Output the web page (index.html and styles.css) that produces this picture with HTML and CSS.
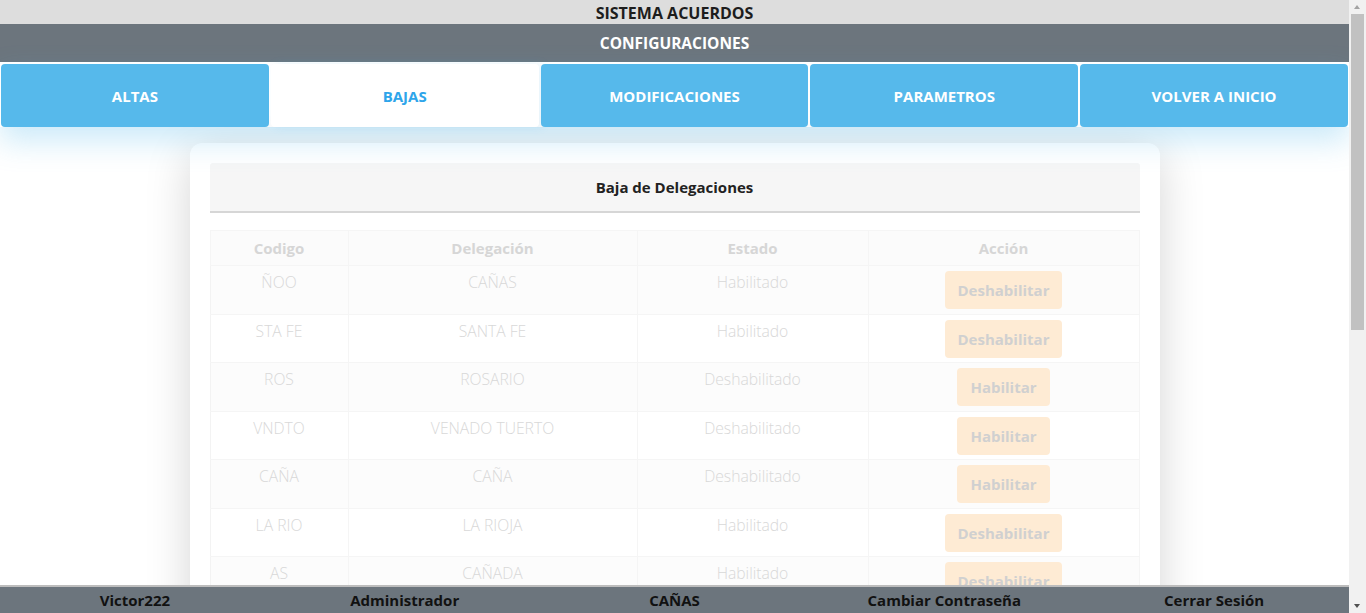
FILE: index.html
```html
<!DOCTYPE html>
<html lang="es">
<head>
<meta charset="utf-8">
<title>Sistema Acuerdos - Configuraciones</title>
<link rel="stylesheet" href="styles.css">
</head>
<body>
<header class="top-bar">SISTEMA ACUERDOS</header>
<div class="section-bar">CONFIGURACIONES</div>
<nav class="tabs">
  <a class="tab">ALTAS</a>
  <a class="tab active">BAJAS</a>
  <a class="tab">MODIFICACIONES</a>
  <a class="tab">PARAMETROS</a>
  <a class="tab">VOLVER A INICIO</a>
</nav>
<main class="content">
  <section class="card">
    <div class="card-header">Baja de Delegaciones</div>
    <table class="grid">
      <thead>
        <tr><th class="c1">Codigo</th><th class="c2">Delegación</th><th class="c3">Estado</th><th class="c4">Acción</th></tr>
      </thead>
      <tbody>
        <tr><td>ÑOO</td><td>CAÑAS</td><td>Habilitado</td><td><button class="btn">Deshabilitar</button></td></tr>
        <tr><td>STA FE</td><td>SANTA FE</td><td>Habilitado</td><td><button class="btn">Deshabilitar</button></td></tr>
        <tr><td>ROS</td><td>ROSARIO</td><td>Deshabilitado</td><td><button class="btn">Habilitar</button></td></tr>
        <tr><td>VNDTO</td><td>VENADO TUERTO</td><td>Deshabilitado</td><td><button class="btn">Habilitar</button></td></tr>
        <tr><td>CAÑA</td><td>CAÑA</td><td>Deshabilitado</td><td><button class="btn">Habilitar</button></td></tr>
        <tr><td>LA RIO</td><td>LA RIOJA</td><td>Habilitado</td><td><button class="btn">Deshabilitar</button></td></tr>
        <tr><td>AS</td><td>CAÑADA</td><td>Habilitado</td><td><button class="btn">Deshabilitar</button></td></tr>
        <tr><td>RAF</td><td>RAFAELA</td><td>Habilitado</td><td><button class="btn">Deshabilitar</button></td></tr>
        <tr><td>RECO</td><td>RECONQUISTA</td><td>Habilitado</td><td><button class="btn">Deshabilitar</button></td></tr>
        <tr><td>CORD</td><td>CORDOBA</td><td>Deshabilitado</td><td><button class="btn">Habilitar</button></td></tr>
        <tr><td>BSAS</td><td>BUENOS AIRES</td><td>Habilitado</td><td><button class="btn">Deshabilitar</button></td></tr>
        <tr><td>PARA</td><td>PARANA</td><td>Habilitado</td><td><button class="btn">Deshabilitar</button></td></tr>
      </tbody>
    </table>
  </section>
</main>
<footer class="footer">
  <span>Victor222</span>
  <span>Administrador</span>
  <span>CAÑAS</span>
  <span>Cambiar Contraseña</span>
  <span>Cerrar Sesión</span>
</footer>
<div class="scrollbar" aria-hidden="true">
  <span class="sb-arrow sb-up"></span>
  <span class="sb-thumb"></span>
  <span class="sb-arrow sb-down"></span>
</div>
</body>
</html>
```

FILE: styles.css
```css
* { box-sizing: border-box; }

html {
  overflow: hidden;
}

html, body {
  padding: 0;
  background: #ffffff;
  font-family: "Open Sans", "Noto Sans", "Liberation Sans", sans-serif;
}

body {
  margin: 0 17px 0 0;
}

.top-bar {
  height: 24px;
  background: #dddddd;
  color: #1d1d1d;
  font-weight: 700;
  font-size: 16px;
  line-height: 26px;
  text-align: center;
}

.section-bar {
  height: 38px;
  background: #6c757d;
  color: #ffffff;
  font-weight: 700;
  font-size: 15.5px;
  line-height: 38px;
  text-align: center;
}

.tabs {
  display: grid;
  grid-template-columns: repeat(5, 1fr);
  gap: 2px;
  padding: 2px 1px 0 1px;
  box-shadow: 0 14px 30px rgba(86, 184, 234, 0.3);
  position: relative;
  z-index: 1;
}

.tab {
  height: 63px;
  background: #56b9eb;
  color: #ffffff;
  border-radius: 4px;
  font-weight: 700;
  font-size: 15px;
  display: flex;
  align-items: center;
  justify-content: center;
}

.tab.active {
  background: #ffffff;
  color: #2ea5ea;
  box-shadow: 4px 0 8px rgba(86, 184, 234, 0.15);
}

.content {
  padding: 16px 0 60px;
  display: flex;
  justify-content: center;
}

.card {
  width: 970px;
  background: #ffffff;
  border-radius: 12px;
  padding: 20px;
  box-shadow: 0 10px 45px rgba(0, 0, 0, 0.17);
}

.card-header {
  height: 50px;
  background: #f6f6f6;
  border-bottom: 2px solid #d6d6d6;
  border-radius: 3px 3px 0 0;
  font-weight: 700;
  font-size: 15px;
  color: #222222;
  display: flex;
  align-items: center;
  justify-content: center;
}

.grid {
  width: 100%;
  margin-top: 17px;
  border-collapse: collapse;
  text-align: center;
}

.grid th {
  height: 35px;
  font-weight: 700;
  font-size: 15px;
  color: #d6d6d6;
  background: #fbfbfb;
  border: 1px solid #f5f5f5;
  padding: 0 8px;
}

.c1 { width: 138px; }
.c2 { width: 289px; }
.c3 { width: 231px; }

.grid td {
  height: 48.5px;
  padding: 4px 8px;
  vertical-align: top;
  font-weight: 300;
  font-size: 15.7px;
  line-height: 24px;
  color: #d8d8d8;
  border: 1px solid #f5f5f5;
  border-left-color: #f3f3f3;
}

.grid tbody tr:nth-child(odd) td { background: #fcfcfc; }

.grid td:last-child { padding-top: 5px; }

.btn {
  height: 38px;
  padding: 0 13px;
  border: none;
  border-radius: 4px;
  background: #feebd4;
  color: #d0d0d0;
  font-family: inherit;
  font-weight: 700;
  font-size: 15px;
}

.footer {
  position: fixed;
  left: 0;
  right: 17px;
  bottom: 0;
  height: 28px;
  background: #6c757d;
  border-top: 2px solid #bdbdbd;
  display: grid;
  grid-template-columns: repeat(5, 1fr);
  align-items: center;
  text-align: center;
  font-weight: 700;
  font-size: 15px;
  color: #111111;
  z-index: 5;
}

.scrollbar {
  position: fixed;
  top: 0;
  right: 0;
  bottom: 0;
  width: 17px;
  background: #f1f1f1;
  z-index: 10;
}

.sb-thumb {
  position: absolute;
  top: 14px;
  left: 2px;
  width: 13px;
  height: 316px;
  background: #c1c1c1;
}

.sb-arrow {
  position: absolute;
  left: 5px;
  width: 0;
  height: 0;
  border-left: 3.5px solid transparent;
  border-right: 3.5px solid transparent;
}

.sb-up {
  top: 5px;
  border-bottom: 4px solid #a3a3a3;
}

.sb-down {
  bottom: 5px;
  border-top: 4px solid #505050;
}
```
